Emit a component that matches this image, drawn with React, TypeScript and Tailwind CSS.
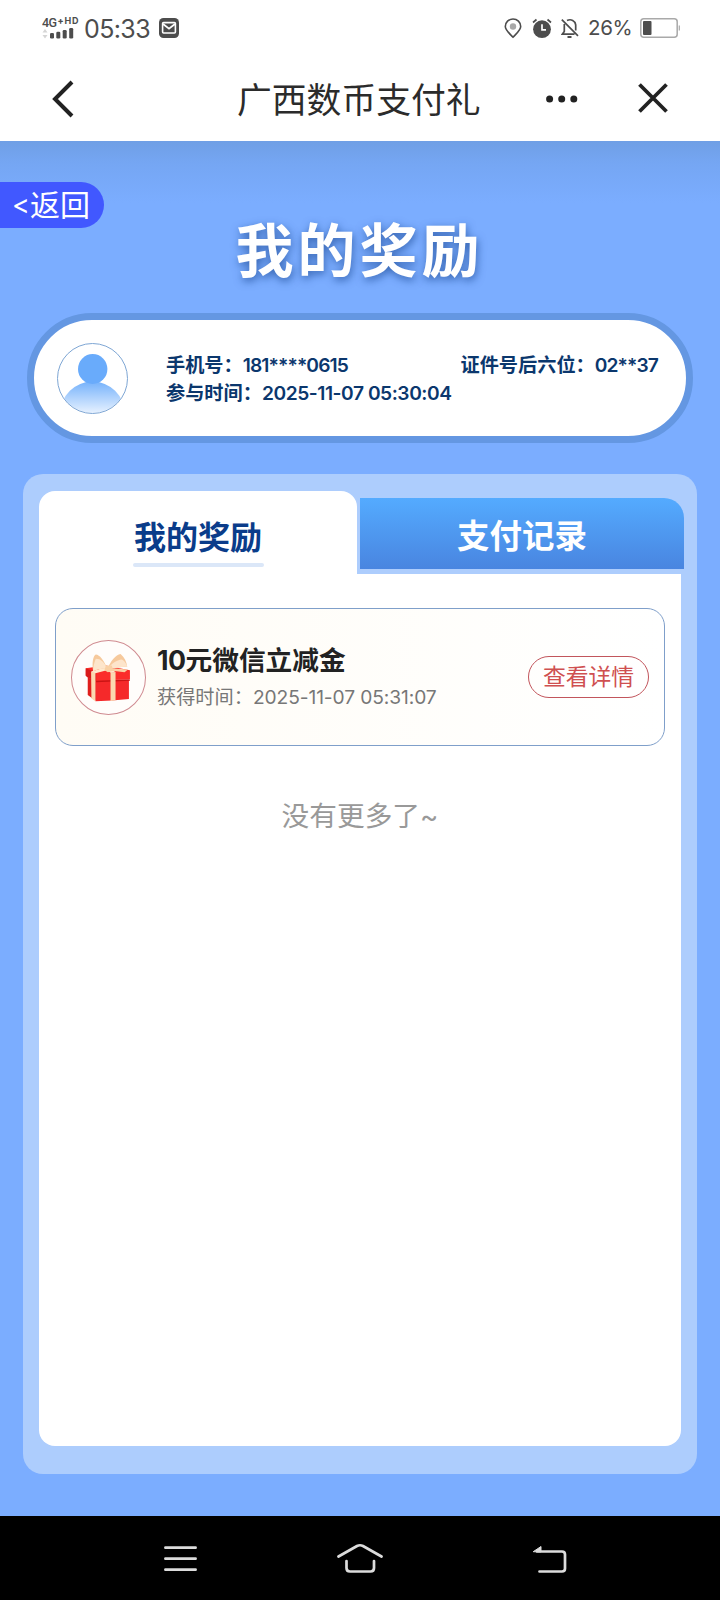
import { useState } from "react";

interface Reward {
  id: number;
  name: string;
  time: string;
}

const rewards: Reward[] = [
  { id: 1, name: "10元微信立减金", time: "2025-11-07 05:31:07" },
];

const StatusBar = () => {
  return (
    <div className="flex h-14 items-center justify-between pl-[42px] pr-10 text-[#4d4d4d]">
      <div className="flex items-center">
        <svg width="38" height="24" viewBox="0 0 38 24" className="mr-1" fill="#4d4d4d">
          <text x="0" y="10.5" fontSize="12.5" fontWeight="500" fontFamily="Roboto" textLength="15">4G</text>
          <text x="15.5" y="8" fontSize="9" fontWeight="800" fontFamily="Inter">+</text>
          <text x="22.5" y="7.5" fontSize="9" fontWeight="700" fontFamily="Inter" textLength="14">HD</text>
          <path d="M0.5 16.500l2.5-3.5 2.5 3.5zM0.5 19l2.5 3.5 2.5-3.5z" fill="#d5d5d5" />
          <rect x="8" y="17" width="4" height="5.5" rx="1.3" />
          <rect x="14.3" y="15.7" width="4" height="6.8" rx="1.3" />
          <rect x="20.7" y="14" width="4" height="8.5" rx="1.3" />
          <rect x="27.2" y="12" width="4" height="10.5" rx="1.3" />
        </svg>
        <span className="w-[66px] pt-[2px] text-[25px] leading-8 tracking-[-0.600px]">05:33</span>
        <svg width="20" height="20" viewBox="0 0 20 20" className="ml-[9px]">
          <rect width="20" height="20" rx="4.5" fill="#4d4d4d" />
          <rect x="3.6" y="4.6" width="12.8" height="10.4" rx="1" fill="none" stroke="#fff" strokeWidth="1.6" />
          <path d="M4 6l6 4.6L16 6" fill="none" stroke="#fff" strokeWidth="1.8" />
        </svg>
      </div>
      <div className="flex items-center">
        <svg width="18" height="21" viewBox="0 0 18 21" className="mr-[10px]">
          <path d="M9 19.2C5.500 15.500 1.300 12.200 1.300 8.500a7.700 7.500 0 0 1 15.400 0C16.700 12.200 12.500 15.500 9 19.200z" fill="none" stroke="#4d4d4d" strokeWidth="1.6" />
          <circle cx="9" cy="8.500" r="3.200" fill="#a8a8a8" />
        </svg>
        <svg width="20" height="21" viewBox="0 0 20 21" className="mr-[9px]">
          <circle cx="10" cy="11.200" r="8.900" fill="#4d4d4d" />
          <path d="M1 4.500l3.500-3M19 4.500l-3.500-3" stroke="#4d4d4d" strokeWidth="1.700" />
          <path d="M10 6.300v5.500h4" fill="none" stroke="#fff" strokeWidth="1.700" />
        </svg>
        <svg width="18" height="21" viewBox="0 0 18 21" className="mr-[9px]" fill="none" stroke="#4d4d4d" strokeWidth="1.700">
          <path d="M0.800 1.700l16.200 16.200M3.300 6v7.500L1.300 16.200h12.200M6 2.500c4-2 8.300.300 8.700 4.300v5.700" />
          <path d="M6.500 19h4" strokeWidth="2" />
        </svg>
        <span className="w-[44px] pt-px text-[20.500px] tracking-[-0.300px]">26%</span>
        <svg width="40" height="20" viewBox="0 0 40 20" className="ml-2">
          <rect x="0.800" y="0.800" width="36.400" height="18.400" rx="3" fill="#fff" stroke="#a9a9a9" strokeWidth="1.500" />
          <rect x="3" y="3" width="8.500" height="14" rx="1" fill="#4d4d4d" />
          <path d="M39.300 7.500v5" stroke="#a9a9a9" strokeWidth="1.200" />
        </svg>
      </div>
    </div>
  );
};

const TitleBar = () => {
  return (
    <div className="flex h-[85px] items-center pl-[52px] pr-[52px]">
      <svg width="22" height="38" viewBox="0 0 22 38" fill="none" stroke="#222" strokeWidth="4">
        <path d="M20 2L3 19l17 17" />
      </svg>
      <h1 className="ml-[163px] w-[246px] pt-[3px] whitespace-nowrap text-[34.800px] text-[#2b2b2b]">
        广西数币支付礼
      </h1>
      <svg width="32" height="8" viewBox="0 0 32 8" className="ml-[63px]" fill="#222">
        <circle cx="3.600" cy="4" r="3.500" />
        <circle cx="15.700" cy="4" r="3.500" />
        <circle cx="27.800" cy="4" r="3.500" />
      </svg>
      <svg width="30" height="30" viewBox="0 0 30 30" className="ml-auto -mt-px" stroke="#222" strokeWidth="3.800">
        <path d="M1.500 1.500l27 27M28.500 1.500l-27 27" />
      </svg>
    </div>
  );
};

const Avatar = () => {
  return (
    <svg width="71" height="71" viewBox="0 0 71 71" className="shrink-0">
      <defs>
        <linearGradient id="body" gradientUnits="userSpaceOnUse" x1="0" y1="38" x2="0" y2="70">
          <stop offset="0" stopColor="#74b1fb" />
          <stop offset="1" stopColor="#e6f1ff" />
        </linearGradient>
        <clipPath id="round">
          <circle cx="35.500" cy="35.500" r="34.500" />
        </clipPath>
      </defs>
      <g clipPath="url(#round)">
        <ellipse cx="35.500" cy="70" rx="32" ry="31.500" fill="url(#body)" />
        <ellipse cx="35.700" cy="26" rx="14.700" ry="15" fill="#69abfb" />
      </g>
      <circle cx="35.500" cy="35.500" r="35" fill="none" stroke="#7ea6d4" />
    </svg>
  );
};

const GiftIcon = () => {
  return (
    <svg width="75" height="75" viewBox="0 0 224 224" className="shrink-0">
      <circle cx="112" cy="112" r="110.500" fill="#fffdfb" stroke="#cf8a90" strokeWidth="3" />
      <path d="M50 112l25 8v62l-25-18z" fill="#e01e1c" />
      <path d="M73 118l100 0v58l-50 5-50 2z" fill="#f5292a" />
      <path d="M44 84l60-8 72 14v27l-101 5-24-10-7-6z" fill="#fb2d2a" />
      <path d="M44 84l31 12v27l-24-10-7-6z" fill="#d91a1a" />
      <path d="M75 122l101-4v4l-101 4z" fill="#c91414" />
      <path d="M60 94l13 3v86l-12-8zM118 96h15v84l-15 2z" fill="#fbd9b0" />
      <path d="M60 94l48-14 26 16-15 2-12-8-34 9z" fill="#ffe9cd" />
      <path d="M108 84C98 60 86 44 74 43c-8 4-12 26-8 50 16-8 28-8 42-9z" fill="#f6c99c" />
      <path d="M108 84C98 66 90 56 74 56c-4 10-8 24-8 37 16-8 28-8 42-9z" fill="#fde5cb" />
      <path d="M110 84c8-20 24-40 38-42 12 10 18 24 20 38-20-2-40 8-58 4z" fill="#f6c99c" />
      <path d="M110 84c12-14 26-24 42-26 10 6 14 14 16 22-20-2-40 8-58 4z" fill="#fde5cb" />
      <path d="M104 76h18l4 16-16 4-10-6zM122 84l48 4-10 8-36-4z" fill="#f9d0a4" />
    </svg>
  );
};

const NavBar = () => {
  return (
    <div className="flex h-[84px] items-center bg-black pl-[164px] pt-[2px]">
      <svg width="33" height="26" viewBox="0 0 33 26" stroke="#dcdcdc" strokeWidth="2.700" strokeLinecap="round">
        <path d="M1.400 1.700h30.200M1.400 12.700h30.200M1.400 23.700h30.200" />
      </svg>
      <svg width="48" height="30" viewBox="0 0 48 30" className="ml-[139px] -mt-[2px]" fill="none" stroke="#dcdcdc" strokeWidth="2.700" strokeLinecap="round">
        <path d="M2.500 13.500L21 3q3-1.500 6 0l18.500 10.500" />
        <path d="M10.500 18v7q0 3.500 3.500 3.500h20.500q3.500 0 3.500-3.500v-7" />
      </svg>
      <svg width="36" height="28" viewBox="0 0 36 28" className="ml-[148px]" fill="none" stroke="#dcdcdc" strokeWidth="2.700" strokeLinecap="round">
        <path d="M5 6.500h25q3 0 3 3v14q0 3-3 3H7.500" />
        <path d="M1.500 6.500L9 1.500v5z" fill="#dcdcdc" strokeWidth="1" />
      </svg>
    </div>
  );
};

const App: React.FC = () => {
  const [tab, setTab] = useState<string>("reward");

  return (
    <div className="flex h-[1600px] w-[720px] flex-col overflow-hidden bg-[#7badff] font-[Inter,'Noto_Sans_CJK_SC',sans-serif]">
      <header className="h-[141px] shrink-0 bg-white">
        <StatusBar />
        <TitleBar />
      </header>

      <main className="flex flex-1 flex-col bg-[linear-gradient(180deg,#6f9fe5_0px,#75a6f3_22px,#7badff_62px)] pt-[41px]">
        <button className="flex h-[46px] w-[104px] items-center rounded-r-full bg-[#4158ff] pl-3 text-[30px] font-normal text-white">
          <span className="w-[18px] text-[27px]">&lt;</span>返回
        </button>
        <h2 className="-mt-[13px] pr-px text-center text-[58px] leading-[72px] font-bold tracking-[4px] text-white [text-shadow:1px_3px_8px_rgba(30,75,150,0.750)]">
          我的奖励
        </h2>

        <section className="mx-[27px] mt-[26px] flex h-[130px] items-center rounded-full border-[7px] border-[#6497e2] bg-white pl-[23px] pr-7">
          <Avatar />
          <div className="ml-[38px] flex-1 pt-[2px] text-[19.200px] leading-7 font-semibold text-[#0b376d]">
            <div className="flex justify-between">
              <p>
                手机号：<span className="tracking-[-0.900px]">181****0615</span>
              </p>
              <p>
                证件号后六位：<span className="tracking-[-0.900px]">02**37</span>
              </p>
            </div>
            <p>
              参与时间：<span className="tracking-[-0.450px]">2025-11-07 05:30:04</span>
            </p>
          </div>
        </section>

        <section className="mx-[23px] mt-[31px] flex h-[1000px] flex-col rounded-[20px] bg-[#adcdfd] px-4 pt-[17px] pb-7">
          <div className="-mr-[3px] flex h-[83px] items-start">
            <button
              className="flex h-[83px] w-[318px] flex-col items-center rounded-t-2xl bg-white pt-[23px]"
              onClick={() => setTab("reward")}
            >
              <span className="text-[32px] leading-[48px] font-bold text-[#0a3c8a]">我的奖励</span>
              <span className="mt-px h-1 w-[131px] rounded-full bg-[#dbe7f8]"></span>
            </button>
            <button
              className="mt-[7px] ml-[3px] flex h-[71px] flex-1 items-center justify-center rounded-tr-[20px] bg-gradient-to-b from-[#54abff] to-[#4985e0] pt-[7px] text-[32.500px] font-bold text-white"
              onClick={() => setTab("record")}
            >
              支付记录
            </button>
          </div>

          <div className="flex-1 rounded-b-2xl bg-white px-4 pt-[34px]">
            {tab === "reward" &&
              rewards.map((info) => (
                <div
                  className="flex h-[138px] items-center rounded-[18px] border border-[#7f9fca] bg-gradient-to-r from-[#fffcf5] to-white pl-[15px] pr-[15px]"
                  key={info.id}
                >
                  <GiftIcon />
                  <div className="ml-[11px] flex-1">
                    <p className="text-[26.700px] leading-9 font-bold text-[#222]">
                      <span className="tracking-[-0.500px]">{info.name.slice(0, 2)}</span>
                      {info.name.slice(2)}
                    </p>
                    <p className="mt-[3px] text-[19.200px] leading-8 text-[#777]">
                      获得时间：<span className="tracking-[-0.100px]">{info.time}</span>
                    </p>
                  </div>
                  <button className="h-[42px] w-[121px] rounded-full border border-[#c2555c] text-[22.800px] leading-[38px] text-[#cf5050]">
                    查看详情
                  </button>
                </div>
              ))}
            <p className="mt-[48px] text-center text-[27.700px] leading-[44px] text-[#999]">没有更多了~</p>
          </div>
        </section>
      </main>

      <NavBar />
    </div>
  );
};

export default App;
